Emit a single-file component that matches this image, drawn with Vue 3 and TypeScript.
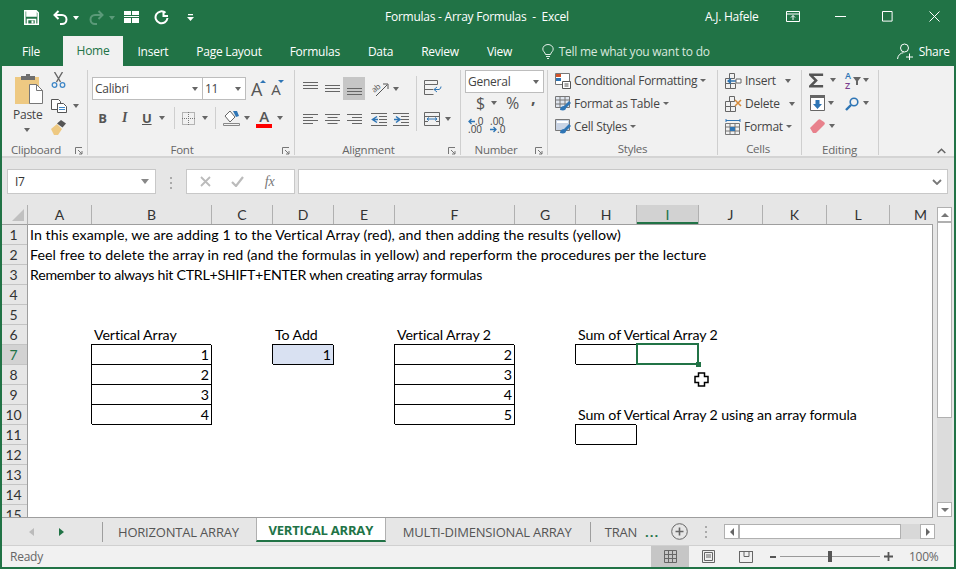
<script setup lang="ts">
import { computed } from 'vue'

// column widths line up with the sheet's gridlines
const columns = [
  { name: 'A', width: 64 }, { name: 'B', width: 120 }, { name: 'C', width: 61 },
  { name: 'D', width: 61 }, { name: 'E', width: 61 }, { name: 'F', width: 120 },
  { name: 'G', width: 61 }, { name: 'H', width: 61 }, { name: 'I', width: 62 },
  { name: 'J', width: 64 }, { name: 'K', width: 64 }, { name: 'L', width: 63 },
  { name: 'M', width: 62 },
]
const gridColumns = computed(() => columns.map((c) => c.width + 'px').join(' '))
const rowNumbers = Array.from({ length: 15 }, (_, i) => i + 1)

type Cell = { col: number; row: number; text?: string; num?: boolean; box?: boolean; fill?: boolean; kind?: string }
const cells: Cell[] = [
  { col: 1, row: 1, kind: 'long', text: 'In this example, we are adding 1 to the Vertical Array (red), and then adding the results (yellow)' },
  { col: 1, row: 2, kind: 'long', text: 'Feel free to delete the array in red (and the formulas in yellow) and reperform the procedures per the lecture' },
  { col: 1, row: 3, kind: 'caps', text: 'Remember to always hit CTRL+SHIFT+ENTER when creating array formulas' },
  { col: 2, row: 6, text: 'Vertical Array' },
  { col: 2, row: 7, text: '1', num: true, box: true },
  { col: 2, row: 8, text: '2', num: true, box: true },
  { col: 2, row: 9, text: '3', num: true, box: true },
  { col: 2, row: 10, text: '4', num: true, box: true },
  { col: 4, row: 6, text: 'To Add' },
  { col: 4, row: 7, text: '1', num: true, box: true, fill: true },
  { col: 6, row: 6, text: 'Vertical Array 2' },
  { col: 6, row: 7, text: '2', num: true, box: true },
  { col: 6, row: 8, text: '3', num: true, box: true },
  { col: 6, row: 9, text: '4', num: true, box: true },
  { col: 6, row: 10, text: '5', num: true, box: true },
  { col: 8, row: 6, text: 'Sum of Vertical Array 2' },
  { col: 8, row: 7, box: true },
  { col: 9, row: 7, box: true },
  { col: 8, row: 10, text: 'Sum of Vertical Array 2 using an array formula' },
  { col: 8, row: 11, box: true },
]

const docTitle = 'Formulas - Array Formulas  -  Excel'
const tabs = ['Insert', 'Page Layout', 'Formulas', 'Data', 'Review', 'View']

const alignIconsRow2 = [
  { d: 'M0 .5h15M0 3.5h10M0 6.5h15M0 9.5h10' },
  { d: 'M0 .5h15M2.5 3.5h10M0 6.5h15M2.5 9.5h10' },
  { d: 'M0 .5h15M5 3.5h10M0 6.5h15M5 9.5h10' },
]
</script>

<template>
  <div class="window">
    <!-- title bar -->
    <header class="titlebar">
      <div class="qat">
        <svg class="q-save" width="15" height="15" viewBox="0 0 15 15" fill="none" stroke="#fff" stroke-width="1.6"><path d="M.8.8h11.4l2 2v11.4H.8z" /><path d="M3 1v5h9V1" fill="#fff" /><path d="M3.5 14.5V9.5h8v5" /><path fill="#fff" stroke="none" d="M7.5 10.5h2v3h-2z" /></svg>
        <svg class="q-undo" width="15" height="15" viewBox="0 0 15 15" fill="none" stroke="#fff" stroke-width="2"><path d="M5.5 1 1.5 5l4 4" /><path d="M2 5h7a4.5 4.5 0 0 1 0 9H7" /></svg>
        <span class="caret white q-c1"></span>
        <svg class="q-redo" width="15" height="15" viewBox="0 0 15 15" fill="none" stroke="#5b9a79" stroke-width="2"><path d="M9.5 1l4 4-4 4" /><path d="M13 5H6a4.5 4.5 0 0 0 0 9h2" /></svg>
        <span class="caret dim q-c2"></span>
        <svg class="q-table" width="16" height="13" viewBox="0 0 16 13" fill="#fff"><path d="M0 0h7v4H0zM8 0h7v4H8zM0 5h15v1H0zM0 7h7v5H0zM8 7h7v5H8z" /></svg>
        <svg class="q-redo2" width="15" height="15" viewBox="0 0 15 15" fill="none" stroke="#fff" stroke-width="2"><path d="M9.5 1v5h4.500" /><path d="M11.500 2.800A6 6 0 1 0 13.500 8" /></svg>
        <svg class="q-more" width="7" height="8" viewBox="0 0 7 8" fill="#fff"><path d="M1 0h5v1.300H1zM0 3h7L3.500 7z" /></svg>
      </div>
      <div class="doc-title">{{ docTitle }}</div>
      <div class="user">A.J. Hafele</div>
      <svg class="ribbon-opt" width="14" height="11" viewBox="0 0 14 11" fill="none" stroke="#fff"><path d="M.5.5h13v10H.5zM.5 3h13M7 9V4.500M5 6.500l2-2 2 2" /></svg>
      <svg class="win-min" width="11" height="1" viewBox="0 0 11 1"><path d="M0 .5h11" stroke="#fff" /></svg>
      <svg class="win-max" width="11" height="11" viewBox="0 0 11 11" fill="none"><path d="M.5.5h9.600v9.600H.5z" stroke="#fff" /></svg>
      <svg class="win-close" width="11" height="11" viewBox="0 0 11 11" fill="none"><path d="M.5.500l10 10M10.500.500l-10 10" stroke="#fff" /></svg>
    </header>

    <!-- menu tabs -->
    <nav class="menubar">
      <span class="file">File</span>
      <span class="home">Home</span>
      <span v-for="t in tabs" :key="t" class="menu-tab">{{ t }}</span>
      <svg class="bulb" width="12" height="15" viewBox="0 0 12 15" fill="none" stroke="#e4efe9"><path d="M3.500 10.500C3 8 .8 7.500.8 5a5.200 4.500 0 0 1 10.400 0c0 2.500-2.200 3-2.700 5.500zM4 12.500h4M5 14.500h2" /></svg>
      <span class="tell">Tell me what you want to do</span>
      <svg class="share-ic" width="17" height="17" viewBox="0 0 17 17" fill="none" stroke="#fff"><circle cx="7.500" cy="5" r="4" /><path d="M.5 16c.5-4 3-6 6-6.300M9 14h7M12.500 10.500v7" /></svg>
      <span class="share">Share</span>
    </nav>

    <!-- ribbon -->
    <section class="ribbon">
      <!-- clipboard -->
      <div class="group" style="width: 86px">
        <div class="body clip">
          <div class="paste">
            <svg class="paste-ic" width="28" height="30" viewBox="0 0 28 30"><path fill="#eec982" d="M0 3h24v27H0z" /><path fill="#6e6e6e" d="M6 2h5V0h4v2h5v4H6z" /><path fill="#fff" stroke="#777" d="M14.500 10.500h7l6 6v13h-13z" /><path fill="none" stroke="#777" d="M21.500 10.500v6h6" /></svg>
            <span class="paste-text">Paste</span>
            <span class="caret"></span>
          </div>
          <div class="clip-small">
            <svg width="15" height="16" viewBox="0 0 15 16" fill="none"><path d="M3.500 0 9.500 10M11.500 0l-6 10" stroke="#666" stroke-width="1.400" /><circle cx="3.500" cy="13" r="2.300" stroke="#3f87c7" stroke-width="1.300" /><circle cx="11.500" cy="13" r="2.300" stroke="#3f87c7" stroke-width="1.300" /></svg>
            <div class="inline-ic">
              <svg width="16" height="14" viewBox="0 0 16 14" fill="#fff" stroke="#555"><path d="M.5.5h7l2 2v8h-9z" /><path d="M6.500 4.500h6l3 3v6h-9z" /><path d="M8 8.500h6M8 10.500h6" stroke="#3f87c7" /></svg>
              <span class="caret"></span>
            </div>
            <svg width="16" height="15" viewBox="0 0 16 15"><path fill="#eec982" d="M0 9l6-5 5 5-4 6H3z" /><path fill="#555" d="M6 3.500 10 0l5 3.500-3.500 4z" /></svg>
          </div>
        </div>
        <div class="label" style="padding-left: 9px; text-align: left">Clipboard</div>
        <svg class="launcher" width="8" height="8" viewBox="0 0 8 8" fill="none" stroke="#777"><path d="M.5 7V.5H7M3 3l4 4M7 4v3H4" /></svg>
      </div>

      <!-- font -->
      <div class="group" style="width: 207px">
        <div class="body font-body">
          <div class="font-row">
            <div class="combo" style="width: 111px"><span>Calibri</span><span class="caret"></span></div>
            <div class="combo" style="width: 44px; margin-left: 0"><span>11</span><span class="caret"></span></div>
            <span class="big-a" style="margin-left: 6px; font-size: 18px">A<i class="tri-up"></i></span>
            <span class="big-a" style="margin-left: 9px; font-size: 15px">A<i class="tri-dn"></i></span>
          </div>
          <div class="font-row2">
            <b class="st" style="margin-left: 6px">B</b>
            <i class="st ital" style="margin-left: 13px">I</i>
            <u class="st und" style="margin-left: 13px">U</u>
            <span class="caret" style="margin-left: 8px"></span>
            <span class="vsep" style="margin: 0 7px 0 9px"></span>
            <svg width="13" height="13" viewBox="0 0 13 13" fill="none" stroke="#777" stroke-dasharray="1 1"><path d="M.5.5h12v12H.5zM6.500 0v13M0 6.500h13" /></svg>
            <span class="caret" style="margin-left: 7px"></span>
            <span class="vsep" style="margin: 0 7px 0 7px"></span>
            <svg width="18" height="16" viewBox="0 0 18 16"><path d="M2 6l5-5 5 6-5 5z" fill="#fff" stroke="#666" /><path d="M10 1h4l2 5-3 1z" fill="#2e75b5" /><path fill="none" stroke="#888" d="M.5 13.500h16v2H.5z" /></svg>
            <span class="caret" style="margin-left: 3px"></span>
            <span class="font-color" style="margin-left: 6px">A<i></i></span>
            <span class="caret" style="margin-left: 5px"></span>
          </div>
        </div>
        <div class="label" style="padding-right: 18px">Font</div>
        <svg class="launcher" width="8" height="8" viewBox="0 0 8 8" fill="none" stroke="#777"><path d="M.5 7V.5H7M3 3l4 4M7 4v3H4" /></svg>
      </div>

      <!-- alignment -->
      <div class="group" style="width: 166px">
        <div class="body align-body">
          <div class="align-left">
            <div class="a-row">
              <span class="a-cell"><svg width="15" height="7" viewBox="0 0 15 7"><path d="M0 .5h15M0 3.500h15M0 6.500h15" stroke="#666" /></svg></span>
              <span class="a-cell"><svg width="15" height="7" viewBox="0 0 15 7"><path d="M0 .5h15M0 3.500h15M0 6.500h15" stroke="#666" /></svg></span>
              <span class="a-cell on"><svg width="15" height="7" viewBox="0 0 15 7"><path d="M0 .5h15M0 3.500h15M0 6.500h15" stroke="#666" /></svg></span>
              <svg class="orient" width="18" height="16" viewBox="0 0 18 16" fill="none"><text x="1" y="10" transform="rotate(-40 5 8)" font-size="8" fill="#555" font-family="Open Sans, sans-serif">ab</text><path d="M5 15 16 4M12 3h5v5" stroke="#555" /></svg>
              <span class="caret" style="margin-left: 4px"></span>
            </div>
            <div class="a-row row2">
              <span v-for="(a, i) in alignIconsRow2" :key="i" class="a-cell"><svg width="15" height="10" viewBox="0 0 15 10"><path :d="a.d" stroke="#666" /></svg></span>
              <svg class="indent" width="16" height="13" viewBox="0 0 16 13" fill="none"><path d="M0 .5h16M8 3.500h8M8 6.500h8M8 9.500h8M0 12.500h16" stroke="#666" /><path d="M6 3.500 1.500 6.500 6 9.500M2 6.500h5" stroke="#2e75b5" stroke-width="1.500" /></svg>
              <svg class="indent" width="16" height="13" viewBox="0 0 16 13" fill="none"><path d="M0 .5h16M8 3.500h8M8 6.500h8M8 9.500h8M0 12.500h16" stroke="#666" /><path d="M1 6.500h5M3 3.500 7 6.500 3 9.500" stroke="#2e75b5" stroke-width="1.500" /></svg>
            </div>
          </div>
          <span class="vsep tall"></span>
          <div class="align-right">
            <svg width="19" height="15" viewBox="0 0 19 15" fill="none"><path d="M.5.5h13v4H.5zM.5 5v9.500h9M.5 9.500h9" stroke="#666" /><path d="M10 9.500h5a3 3 0 0 0 2-3M13 7l-3 2.500 3 2.500" stroke="#2e75b5" /></svg>
            <div class="inline-ic">
              <svg width="16" height="14" viewBox="0 0 16 14" fill="none"><path d="M.5.500h15v13H.5zM0 4.500h16M0 9.500h4M12 9.500h4" stroke="#666" /><path d="M3 7h10M5 5.500 3 7l2 1.500M11 5.500 13 7l-2 1.500" stroke="#2e75b5" /></svg>
              <span class="caret" style="margin-left: -1px"></span>
            </div>
          </div>
        </div>
        <div class="label" style="padding-right: 18px">Alignment</div>
        <svg class="launcher" width="8" height="8" viewBox="0 0 8 8" fill="none" stroke="#777"><path d="M.5 7V.5H7M3 3l4 4M7 4v3H4" /></svg>
      </div>

      <!-- number -->
      <div class="group" style="width: 87px">
        <div class="body num-body">
          <div class="combo general"><span>General</span><span class="caret"></span></div>
          <div class="num-row">
            <span class="dollar">$</span><span class="caret" style="margin-left: 6px"></span>
            <span class="pct">%</span><span class="comma">,</span>
          </div>
          <div class="dec-row">
            <span class="dec"><svg width="7" height="7" viewBox="0 0 7 7" fill="none"><path d="M7 3.500H1M3.500 1 1 3.500 3.500 6" stroke="#2e75b5" stroke-width="1.300" /></svg><b>.0</b><em>.00</em></span>
            <span class="dec" style="margin-left: 8px"><em>.00</em><svg width="7" height="7" viewBox="0 0 7 7" fill="none"><path d="M0 3.500h6M3.500 1 6 3.500 3.500 6" stroke="#2e75b5" stroke-width="1.300" /></svg><b>.0</b></span>
          </div>
        </div>
        <div class="label" style="padding-right: 16px">Number</div>
        <svg class="launcher" width="8" height="8" viewBox="0 0 8 8" fill="none" stroke="#777"><path d="M.5 7V.5H7M3 3l4 4M7 4v3H4" /></svg>
      </div>

      <!-- styles -->
      <div class="group" style="width: 170px">
        <div class="body list-body" style="padding-left: 7px">
          <div class="list-row">
            <svg width="16" height="16" viewBox="0 0 16 16"><path fill="#fff" stroke="#777" d="M.5.5h14v11H.5z" /><path fill="#d2532a" d="M1 1h5v3H1z" /><path fill="#2e75b5" d="M1 5h5v3H1z" /><path fill="#fff" stroke="#555" d="M7.500 8.500h8v7h-8z" /><path d="M9.500 11h4M9.500 13h4" stroke="#555" /></svg>
            <span>Conditional Formatting</span><span class="caret tiny"></span>
          </div>
          <div class="list-row">
            <svg width="16" height="16" viewBox="0 0 16 16"><path fill="#dfe5ee" stroke="#777" d="M.5.5h14v11H.5z" /><path stroke="#777" d="M5 0v12M10 0v12M0 4h15M0 8h15" /><path fill="#2e75b5" d="M5 14c0-3 2-4 4-4l5-5 2 2-5 5c0 2-2 3-6 2z" /></svg>
            <span>Format as Table</span><span class="caret tiny"></span>
          </div>
          <div class="list-row">
            <svg width="16" height="16" viewBox="0 0 16 16"><path fill="#c9d4e5" stroke="#777" d="M.5.500h14v11H.5z" /><path fill="#fff" d="M2 2h11v2H2z" /><path fill="#2e75b5" d="M5 14c0-3 2-4 4-4l5-5 2 2-5 5c0 2-2 3-6 2z" /></svg>
            <span>Cell Styles</span><span class="caret tiny"></span>
          </div>
        </div>
        <div class="label">Styles</div>
      </div>

      <!-- cells -->
      <div class="group" style="width: 84px">
        <div class="body list-body" style="padding-left: 7px">
          <div class="list-row">
            <svg width="17" height="16" viewBox="0 0 17 16" fill="none"><path d="M4.500.5h5v5h-5zM.5 5.500h5v5h-5zM5.500 10.500h5v5h-5zM.5 10.500h5v5h-5z" stroke="#666" /><path d="M11 8H3M6 5.500 3 8l3 2.500" stroke="#2e75b5" stroke-width="1.300" /><path d="M11 6h5v4h-5z" fill="#fff" stroke="#666" /></svg>
            <span>Insert</span><span class="caret" style="margin-left: 9px"></span>
          </div>
          <div class="list-row">
            <svg width="17" height="16" viewBox="0 0 17 16" fill="none"><path d="M4.500.5h5v5h-5zM.5 5.500h5v5h-5zM5.500 10.500h5v5h-5zM.5 10.500h5v5h-5z" stroke="#666" /><path d="M10 4l6 6M16 4l-6 6" stroke="#d48a3a" stroke-width="1.500" /></svg>
            <span>Delete</span><span class="caret" style="margin-left: 9px"></span>
          </div>
          <div class="list-row">
            <svg width="16" height="16" viewBox="0 0 16 16" fill="none"><path d="M.5 4.500h14v11H.5zM5 4v12M10 4v12M0 8h15M0 12h15" stroke="#777" /><path fill="#2e75b5" d="M5 8h5v4H5z" /><path d="M1 1.500h14M1 0v3M15 0v3" stroke="#2e75b5" /></svg>
            <span>Format</span><span class="caret tiny"></span>
          </div>
        </div>
        <div class="label" style="padding-right: 3px">Cells</div>
      </div>

      <!-- editing -->
      <div class="group" style="width: 77px">
        <div class="body edit-body">
          <svg class="ed1" width="15" height="15" viewBox="0 0 17 16"><path fill="#555" d="M0 0h16v3H5l5 5-5 5h11v3H0v-2l6-6-6-6z" /></svg>
          <span class="caret ed-c1"></span>
          <svg class="ed2" width="17" height="15" viewBox="0 0 17 15"><path fill="#666" d="M8 4h8l-3 4v4h-2V8z" /></svg>
          <span class="az az-a">A</span><span class="az az-z">Z</span>
          <span class="caret ed-c2"></span>
          <svg class="ed3" width="15" height="16" viewBox="0 0 15 16"><path fill="#fff" stroke="#666" d="M.5.500h14v15H.5z" /><path fill="#666" d="M0 0h15v3H0z" /><path fill="#2e75b5" d="M5.500 5h4v4h2.500l-4.500 5L3 9h2.500z" /></svg>
          <span class="caret ed-c3"></span>
          <svg class="ed4" width="14" height="14" viewBox="0 0 14 14" fill="none" stroke="#2e75b5"><circle cx="9" cy="5" r="3.800" stroke-width="1.600" /><path d="M6 8 1 13" stroke-width="2.400" /></svg>
          <span class="caret ed-c4"></span>
          <svg class="ed5" width="15" height="14" viewBox="0 0 15 14"><path fill="#e8818c" d="M0 9l8-8a2 2 0 0 1 3 0l3 2a2 2 0 0 1 0 3l-8 8H3z" /></svg>
          <span class="caret ed-c5"></span>
        </div>
        <div class="label" style="padding-right: 1px">Editing</div>
      </div>

      <svg class="collapse" width="9" height="6" viewBox="0 0 9 6" fill="none"><path d="M.7 5 4.500 1.200 8.300 5" stroke="#666" stroke-width="1.500" /></svg>
    </section>

    <!-- formula bar -->
    <div class="formula-band">
      <div class="namebox"><span>I7</span><span class="caret"></span></div>
      <div class="grip"><i></i><i></i><i></i></div>
      <div class="fx-box">
        <svg width="11" height="11" viewBox="0 0 11 11"><path d="M1 1l9 9M10 1l-9 9" stroke="#bbb" stroke-width="1.800" /></svg>
        <svg width="13" height="11" viewBox="0 0 13 11"><path d="M1 6l4 4 7-9" fill="none" stroke="#bbb" stroke-width="2.200" /></svg>
        <em class="fx">fx</em>
      </div>
      <div class="fx-input">
        <svg width="10" height="6" viewBox="0 0 10 6"><path d="M1 1l4 4 4-4" fill="none" stroke="#777" stroke-width="1.800" /></svg>
      </div>
    </div>

    <!-- sheet -->
    <div class="sheet">
      <div class="sheet-main">
        <div class="col-head">
          <div class="corner"><i></i></div>
          <div class="col-names" :style="{ gridTemplateColumns: gridColumns }">
            <span v-for="c in columns" :key="c.name" :class="{ sel: c.name === 'I' }">{{ c.name }}</span>
          </div>
        </div>
        <div class="sheet-body">
          <div class="row-head">
            <span v-for="r in rowNumbers" :key="r" :class="{ sel: r === 7 }">{{ r }}</span>
          </div>
          <div class="cells" :style="{ gridTemplateColumns: gridColumns }">
            <div
              v-for="c in cells"
              :key="c.col + '-' + c.row"
              class="cell"
              :class="[c.kind, { num: c.num, box: c.box, fill: c.fill }]"
              :style="{ gridColumn: c.col, gridRow: c.row }"
            >{{ c.text }}</div>
            <div class="active-cell"></div>
            <svg class="cell-cursor" width="15" height="15" viewBox="0 0 15 15"><path d="M4.500 1h6v3.500H14v6h-3.500V14h-6v-3.500H1v-6h3.500z" fill="#fff" stroke="#000" stroke-width="1.500" /></svg>
          </div>
        </div>
      </div>
      <div class="vscroll">
        <button class="sb-btn"><i class="sb-up"></i></button>
        <div class="sb-thumb"></div>
        <div class="sb-track"></div>
        <button class="sb-btn"><i class="sb-down"></i></button>
      </div>
    </div>

    <!-- sheet tabs -->
    <div class="tabbar">
      <i class="nav-left"></i>
      <i class="nav-right"></i>
      <span class="tab-sep" style="margin-left: 38px"></span>
      <span class="sheet-tab" style="margin-left: 15px">HORIZONTAL ARRAY</span>
      <span class="sheet-tab active">VERTICAL ARRAY</span>
      <span class="sheet-tab" style="margin-left: 17px">MULTI-DIMENSIONAL ARRAY</span>
      <span class="tab-sep" style="margin-left: 18px"></span>
      <span class="sheet-tab" style="margin-left: 14px">TRAN</span>
      <span class="more-tabs">...</span>
      <svg class="add-sheet" width="17" height="17" viewBox="0 0 17 17" fill="none" stroke="#666"><circle cx="8.500" cy="8.500" r="7.800" /><path d="M8.500 4.500v8M4.500 8.500h8" stroke-width="1.600" /></svg>
      <div class="grip tab-grip"><i></i><i></i><i></i></div>
      <div class="hscroll">
        <button class="hs-btn"><i class="hs-left"></i></button>
        <div class="hs-thumb"></div>
        <div class="hs-track"></div>
        <button class="hs-btn"><i class="hs-right"></i></button>
      </div>
    </div>

    <!-- status bar -->
    <footer class="statusbar">
      <span class="ready">Ready</span>
      <div class="view-btn on">
        <svg width="13" height="13" viewBox="0 0 13 13" fill="none" stroke="#666"><path d="M.5.500h12v12H.5zM4.500 0v13M8.500 0v13M0 4.500h13M0 8.500h13" /></svg>
      </div>
      <div class="view-btn">
        <svg width="13" height="13" viewBox="0 0 13 13" fill="none" stroke="#666"><path d="M.5.500h12v12H.5zM2.500 2.500h8v8h-8zM4 5h5M4 7h5" /></svg>
      </div>
      <div class="view-btn">
        <svg width="14" height="12" viewBox="0 0 14 12" fill="none" stroke="#666"><path d="M.5 0v11.500h13V0M.5.500h13M5 0v5.500h5V0" /></svg>
      </div>
      <div class="zoom-slider">
        <i class="z-minus"></i>
        <div class="z-line"><i></i></div>
        <svg width="9" height="9" viewBox="0 0 9 9"><path d="M0 4.500h9M4.500 0v9" stroke="#555" stroke-width="1.800" /></svg>
      </div>
      <span class="zoom-pct">100%</span>
    </footer>
  </div>
</template>

<style>
html, body {
  margin: 0;
  background: #fff;
}
</style>

<style scoped>
.window {
  width: 956px;
  height: 569px;
  box-sizing: border-box;
  border: 2px solid #217346;
  border-top: 0;
  display: flex;
  flex-direction: column;
  overflow: hidden;
  font-family: "Open Sans", "Liberation Sans", sans-serif;
  font-size: 12px;
  letter-spacing: -0.25px;
  color: #444;
  background: #e6e6e6;
}
.caret {
  display: inline-block;
  width: 0;
  height: 0;
  border-left: 3.5px solid transparent;
  border-right: 3.5px solid transparent;
  border-top: 4px solid #666;
  flex: none;
}
.caret.tiny {
  margin-left: 3px;
  border-left-width: 3px;
  border-right-width: 3px;
  border-top-width: 3px;
}
.caret.white { border-top-color: #fff; }
.caret.dim { border-top-color: #5b9a79; }

/* title bar */
.titlebar {
  height: 36px;
  flex: none;
  display: flex;
  align-items: center;
  box-sizing: border-box;
  padding-bottom: 4px;
  background: #217346;
  color: #fff;
}
.qat {
  display: flex;
  align-items: center;
  width: 383px;
  padding: 3px 0 0 22px;
  box-sizing: border-box;
}
.q-undo { margin-left: 14px; }
.q-c1 { margin-left: 5px; }
.q-redo { margin-left: 10px; }
.q-c2 { margin-left: 5px; }
.q-table { margin-left: 9px; }
.q-redo2 { margin-left: 14px; }
.q-more { margin-left: 18px; }
.doc-title {
  width: 320px;
  white-space: pre;
}
.user { width: 81px; }
.win-min { margin-left: 35px; }
.win-max { margin-left: 36px; }
.win-close { margin-left: 36px; }

/* menu */
.menubar {
  height: 30px;
  flex: none;
  display: flex;
  align-items: center;
  background: #217346;
  color: #fff;
  white-space: nowrap;
}
.file { margin-left: 20px; width: 41px; }
.home {
  height: 30px;
  line-height: 30px;
  width: 60px;
  margin-right: 0.5px;
  text-align: center;
  color: #217346;
  background: #f1f1f1;
}
.menu-tab {
  padding: 0 14px;
}
.bulb { margin-left: 15.5px; flex: none; }
.tell { margin-left: 5px; color: #d9e8df; width: 338px; flex: none; }
.share-ic { flex: none; }
.share { margin-left: 5px; }

/* ribbon */
.ribbon {
  height: 92px;
  flex: none;
  display: flex;
  box-sizing: border-box;
  padding-top: 4px;
  background: #f1f1f1;
  border-bottom: 2px solid #d4d4d4;
  position: relative;
}
.group {
  height: 85px;
  flex: none;
  box-sizing: border-box;
  border-right: 1px solid #cfcfcf;
  position: relative;
}
.body { height: 75px; box-sizing: border-box; }
.label {
  height: 10px;
  line-height: 10px;
  text-align: center;
  color: #666;
  font-size: 11.5px;
}
.launcher { position: absolute; right: 4px; bottom: 0; }
.vsep {
  display: inline-block;
  width: 1px;
  height: 22px;
  background: #cfcfcf;
  flex: none;
}
.inline-ic {
  display: flex;
  align-items: center;
  gap: 6px;
}
.clip { display: flex; }
.paste {
  width: 38px;
  margin-left: 11px;
  padding-top: 4px;
  display: flex;
  flex-direction: column;
  align-items: flex-start;
}
.paste-ic { margin-left: 2px; flex: none; }
.paste-text { margin-top: 3px; line-height: 16px; color: #444; }
.paste .caret { margin: 5px 0 0 11px; }
.clip-small {
  height: 63px;
  padding-top: 2px;
  display: flex;
  flex-direction: column;
  justify-content: space-between;
}
.clip-small .inline-ic { margin-top: 3px; }

.font-body { padding: 7px 0 0 4px; }
.font-row { display: flex; align-items: center; height: 23px; }
.combo {
  height: 23px;
  box-sizing: border-box;
  border: 1px solid #bdbdbd;
  background: #fff;
  display: flex;
  align-items: center;
  justify-content: space-between;
  padding: 0 4px 0 2px;
  color: #444;
  margin-right: -1px;
}
.big-a {
  position: relative;
  font-weight: 400;
  color: #555;
  line-height: 20px;
}
.tri-up, .tri-dn {
  position: absolute;
  right: -4px;
  top: 1px;
  width: 0;
  height: 0;
  border-left: 3px solid transparent;
  border-right: 3px solid transparent;
}
.tri-up { border-bottom: 3px solid #2e75b5; }
.tri-dn { border-top: 3px solid #2e75b5; }
.font-row2 {
  display: flex;
  align-items: center;
  height: 24px;
  margin-top: 6px;
}
.st {
  width: 9px;
  text-align: center;
  font-size: 13px;
  color: #555;
  font-style: normal;
}
.ital { font-family: "Liberation Serif", serif; font-style: italic; font-weight: 700; font-size: 14px; }
.und { font-weight: 700; }
.font-color {
  position: relative;
  width: 16px;
  text-align: center;
  font-size: 15px;
  font-weight: 600;
  color: #555;
  line-height: 16px;
  height: 20px;
}
.font-color i {
  position: absolute;
  left: 0;
  bottom: 0;
  width: 16px;
  height: 4px;
  background: #f00;
}

.align-body { display: flex; padding-left: 4px; }
.align-left { width: 117px; }
.a-row { display: flex; align-items: center; height: 23px; margin-top: 7px; }
.a-row.row2 { margin-top: 8px; height: 22px; padding-bottom: 0; }
.a-cell {
  width: 22px;
  height: 23px;
  flex: none;
  display: flex;
  align-items: center;
  justify-content: center;
}
.a-row .a-cell:first-child { margin-left: 0; }
.a-cell.on { background: #c6c6c6; }
.a-cell.on svg { margin-top: 6px; }
.a-row:first-child .a-cell:first-child svg { margin-top: -6px; }
.orient { margin-left: 6px; overflow: visible; }
.indent { margin-left: 6px; flex: none; }
.indent + .indent { margin-left: 6px; }
.vsep.tall { height: 55px; margin-top: 6px; }
.align-right {
  padding: 10px 0 0 7px;
  display: flex;
  flex-direction: column;
  gap: 17px;
}
.align-right svg:first-child { flex: none; }

.num-body { padding: 0 0 0 4px; }
.general { width: 79px; margin: 0; }
.num-row {
  display: flex;
  align-items: center;
  height: 20px;
  padding-left: 11px;
}
.dollar { font-size: 16px; color: #555; }
.pct { font-size: 16px; color: #555; margin-left: 9px; }
.comma { font-size: 16px; font-weight: 700; color: #555; margin: -10px 0 0 12px; }
.dec-row { display: flex; padding-left: 3px; margin-top: 5px; }
.dec {
  width: 14px;
  height: 15px;
  display: grid;
  grid-template-columns: 7px 7px;
  grid-auto-rows: 7.5px;
  line-height: 7.5px;
  font-size: 10px;
  color: #444;
  letter-spacing: 0;
  text-align: right;
}
.dec b { font-weight: 400; }
.dec em { grid-column: 1 / 3; font-style: normal; }

.list-body {
  padding-top: 0;
  margin-top: -1px;
  display: flex;
  flex-direction: column;
}
.list-row {
  height: 23px;
  display: flex;
  align-items: center;
  white-space: nowrap;
}
.list-row span:not(.caret) { margin-left: 3px; }

.edit-body { position: relative; }
.edit-body > * { position: absolute; }
.ed1 { left: 7px; top: 3px; }
.ed-c1 { left: 28px; top: 8px; }
.ed2 { left: 43px; top: 3px; }
.az {
  left: 43px;
  font-size: 9px;
  line-height: 9px;
  font-weight: 600;
  letter-spacing: 0;
}
.az-a { top: 1px; color: #2e75b5; }
.az-z { top: 11px; color: #7a3f8f; }
.ed-c2 { left: 61px; top: 8px; }
.ed3 { left: 8px; top: 25px; }
.ed-c3 { left: 26px; top: 31px; }
.ed4 { left: 43px; top: 27px; }
.ed-c4 { left: 61px; top: 31px; }
.ed5 { left: 8px; top: 49px; }
.ed-c5 { left: 27px; top: 54px; }
.collapse { position: absolute; left: 935px; top: 82px; }

/* formula bar */
.formula-band {
  height: 47px;
  flex: none;
  box-sizing: border-box;
  padding: 11px 6px 0 5px;
  display: flex;
  align-items: flex-start;
}
.namebox {
  width: 149px;
  height: 25px;
  box-sizing: border-box;
  background: #fff;
  border: 1px solid #c8c8c8;
  display: flex;
  align-items: center;
  justify-content: space-between;
  padding: 0 6px 0 7px;
  color: #333;
  font-size: 12px;
}
.namebox .caret { border-top-color: #888; border-left-width: 4px; border-right-width: 4px; border-top-width: 5px; }
.grip {
  display: flex;
  flex-direction: column;
  gap: 3px;
  width: 30px;
  align-items: center;
  padding-top: 8px;
}
.grip i { width: 2px; height: 2px; background: #aaa; }
.fx-box {
  width: 109px;
  height: 25px;
  box-sizing: border-box;
  background: #fff;
  border: 1px solid #c8c8c8;
  display: flex;
  align-items: center;
  padding-left: 13px;
  gap: 20px;
}
.fx {
  font-family: "Liberation Serif", serif;
  font-size: 14px;
  color: #777;
  margin-left: 1px;
}
.fx-input {
  width: 651px;
  margin-left: 3px;
  height: 25px;
  box-sizing: border-box;
  background: #fff;
  border: 1px solid #c8c8c8;
  display: flex;
  align-items: center;
  justify-content: flex-end;
  padding-right: 5px;
}

/* sheet */
.sheet {
  height: 313px;
  flex: none;
  display: flex;
}
.sheet-main { width: 931px; flex: none; }
.col-head { height: 20px; display: flex; }
.corner {
  width: 26px;
  flex: none;
  box-sizing: border-box;
  position: relative;
  border-right: 1px solid #b0b0b0;
  border-bottom: 1px solid #9e9e9e;
}
.corner i {
  position: absolute;
  right: 3px;
  bottom: 3px;
  width: 0;
  height: 0;
  border-left: 12px solid transparent;
  border-bottom: 12px solid #c0c0c0;
}
.col-names {
  flex: 1;
  display: grid;
  overflow: hidden;
  font-family: Lato, "Liberation Sans", sans-serif;
  font-size: 14px;
  letter-spacing: 0;
  border-bottom: 1px solid #9e9e9e;
  box-sizing: border-box;
}
.col-names span {
  text-align: center;
  line-height: 19px;
  box-sizing: border-box;
  border-right: 1px solid #b0b0b0;
  color: #333;
}
.col-names span.sel {
  background: #d2d2d2;
  color: #217346;
  height: 19px;
  box-shadow: inset 0 -2px 0 #217346;
}
.sheet-body {
  display: flex;
  height: 293px;
  box-sizing: border-box;
  border-bottom: 1px solid #9e9e9e;
}
.row-head {
  width: 26px;
  flex: none;
  overflow: hidden;
  box-sizing: border-box;
  border-right: 1px solid #9e9e9e;
  font-family: Lato, "Liberation Sans", sans-serif;
  font-size: 14px;
  letter-spacing: 0;
}
.row-head span {
  display: block;
  height: 20px;
  line-height: 19px;
  box-sizing: border-box;
  border-bottom: 1px solid #c4c4c4;
  text-align: center;
  color: #333;
  padding-right: 2px;
}
.row-head span.sel {
  background: #d2d2d2;
  color: #217346;
  box-shadow: 2px 0 0 #217346;
  position: relative;
}
.cells {
  flex: 1;
  background: #fff;
  border-right: 1px solid #9e9e9e;
  display: grid;
  grid-template-rows: repeat(15, 20px);
  overflow: hidden;
  position: relative;
  font-family: Lato, "Liberation Sans", sans-serif;
  font-size: 14.2px;
  letter-spacing: -0.1px;
  color: #000;
}
.cell {
  line-height: 20px;
  white-space: nowrap;
  padding: 0 2px;
  box-sizing: border-box;
  min-width: 0;
}
.cell.long { letter-spacing: 0.06px; }
.cell.caps { letter-spacing: -0.27px; }
.cell.num { text-align: right; }
.cell.box {
  border-right: 1px solid #000;
  border-bottom: 1px solid #000;
  box-shadow: -1px -1px 0 #000;
}
.cell.fill { background: #d9e1f2; }
/* selection on I7 */
.active-cell {
  position: absolute;
  left: 608px;
  top: 118px;
  width: 63px;
  height: 22px;
  box-sizing: border-box;
  border: 2px solid #217346;
}
.active-cell::after {
  content: "";
  position: absolute;
  right: -4px;
  bottom: -4px;
  width: 5px;
  height: 5px;
  background: #217346;
}
.cell-cursor {
  position: absolute;
  left: 666px;
  top: 147px;
}
.vscroll {
  width: 15px;
  margin: 2px 0 0 4px;
  height: 310px;
  display: flex;
  flex-direction: column;
}
.sb-btn {
  width: 15px;
  height: 15px;
  padding: 0;
  flex: none;
  background: #fff;
  border: 1px solid #b0b0b0;
  display: flex;
  align-items: center;
  justify-content: center;
}
.sb-up, .sb-down {
  width: 0;
  height: 0;
  border-left: 4px solid transparent;
  border-right: 4px solid transparent;
}
.sb-up { border-bottom: 4px solid #777; }
.sb-down { border-top: 4px solid #777; }
.sb-thumb {
  height: 196px;
  flex: none;
  box-sizing: border-box;
  background: #fff;
  border: 1px solid #b0b0b0;
}
.sb-track { flex: 1; background: #dcdcdc; }

/* sheet tabs */
.tabbar {
  height: 28px;
  flex: none;
  display: flex;
  align-items: center;
  border-bottom: 1px solid #d0d0d0;
  box-sizing: border-box;
  font-size: 13px;
  letter-spacing: -0.2px;
  color: #555;
}
.nav-left, .nav-right {
  width: 0;
  height: 0;
  border-top: 4px solid transparent;
  border-bottom: 4px solid transparent;
}
.nav-left { margin-left: 27px; border-right: 5px solid #bbb; }
.nav-right { margin-left: 25px; border-left: 5px solid #217346; }
.tab-sep {
  width: 1px;
  height: 20px;
  background: #9e9e9e;
  flex: none;
}
.sheet-tab { white-space: nowrap; }
.sheet-tab.active {
  margin-left: 17px;
  width: 130px;
  height: 24px;
  box-sizing: border-box;
  line-height: 24px;
  text-align: center;
  background: #fff;
  color: #217346;
  font-weight: 700;
  border-left: 1px solid #b0b0b0;
  border-right: 1px solid #b0b0b0;
  border-bottom: 2px solid #217346;
  align-self: flex-start;
}
.more-tabs {
  margin-left: 8px;
  color: #217346;
  font-weight: 700;
  letter-spacing: 1px;
  width: 26px;
}
.add-sheet { flex: none; }
.grip.tab-grip { width: 36px; padding-top: 0; }
.hscroll {
  margin-left: 0;
  width: 211px;
  height: 15px;
  display: flex;
  flex: none;
}
.hs-btn {
  width: 15px;
  height: 15px;
  padding: 0;
  flex: none;
  background: #fff;
  border: 1px solid #b0b0b0;
  display: flex;
  align-items: center;
  justify-content: center;
}
.hs-left, .hs-right {
  width: 0;
  height: 0;
  border-top: 4px solid transparent;
  border-bottom: 4px solid transparent;
}
.hs-left { border-right: 4px solid #666; }
.hs-right { border-left: 4px solid #666; }
.hs-thumb {
  width: 162px;
  box-sizing: border-box;
  background: #fff;
  border: 1px solid #b0b0b0;
  margin-left: 0;
}
.hs-track { width: 19px; background: #d8d8d8; }

/* status bar */
.statusbar {
  flex: 1;
  display: flex;
  align-items: center;
  background: #f1f1f1;
  color: #666;
}
.ready { margin-left: 8px; width: 641px; }
.view-btn {
  width: 38px;
  height: 100%;
  flex: none;
  display: flex;
  align-items: center;
  justify-content: center;
}
.view-btn.on { background: #c6c6c6; }
.zoom-slider {
  display: flex;
  align-items: center;
  margin-left: 5px;
}
.z-minus { width: 6px; height: 2px; background: #555; }
.z-line {
  width: 100px;
  height: 1px;
  background: #999;
  margin: 0 4px;
  position: relative;
}
.z-line i {
  position: absolute;
  left: 48px;
  top: -5px;
  width: 4px;
  height: 11px;
  background: #555;
}
.zoom-pct { margin-left: 16px; }
</style>
